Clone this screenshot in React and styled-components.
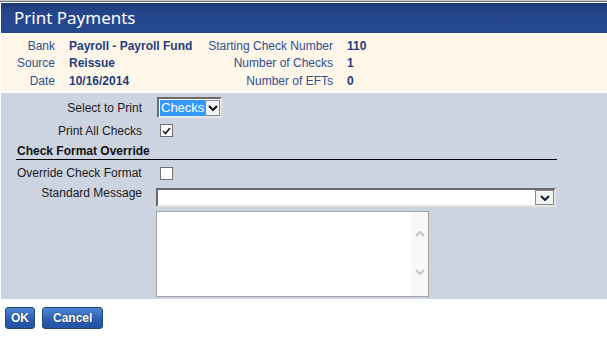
import styled, { createGlobalStyle } from "styled-components";

const Global = createGlobalStyle`
  body {
    margin: 0;
    background: #fff;
    font-family: "Liberation Sans", Arial, sans-serif;
    font-size: 12px;
  }
`

const Page = styled.div`
  width: 607px;
  border-top: 1px solid #c9cbcf;
  box-shadow: inset 0 1px 0 #6b6e73;
  padding-top: 2px;
  padding-left: 1px;
  box-sizing: border-box;
`

const TitleBar = styled.div`
  height: 30px;
  background: linear-gradient(#1d3876 0%, #25468c 35%, #27498f 100%);
  color: #fff;
  font-family: "Noto Sans", "Open Sans", sans-serif;
  font-size: 17px;
  line-height: 30px;
  padding-left: 13px;
`

const Info = styled.div`
  margin-top: 3px;
  background: #fef6e9;
  height: 55px;
  box-sizing: border-box;
  padding-top: 1px;
  display: grid;
  grid-template-columns: 54px 120px 130px auto;
  column-gap: 14px;
  grid-auto-rows: 17.5px;
  align-items: center;
  white-space: nowrap;
`

const InfoLabel = styled.div`
  color: #2f4f8f;
  text-align: right;
`

const InfoValue = styled.div`
  color: #1f3d7c;
  font-weight: bold;
`

const Form = styled.div`
  margin-top: 2px;
  background: #cdd4e1;
  height: 206px;
  box-sizing: border-box;
  padding: 4px 0 0 15px;
`

const Row = styled.div`
  display: grid;
  grid-template-columns: 126px 1fr;
  column-gap: 14px;
  align-items: ${p => p.top ? "start" : "center"};
  height: ${p => p.h}px;
  color: #1b1b1b;
`

const Label = styled.div`
  text-align: ${p => p.left ? "left" : "right"};
  padding-left: ${p => p.left ? "1px" : "0"};
  padding-top: ${p => p.pt || 0}px;
  line-height: 14px;
`

const Heading = styled.div`
  font-weight: bold;
  color: #111;
  padding-left: 1px;
  height: 16px;
  line-height: 17px;
  border-bottom: 1px solid #000;
  width: 540px;
`

const SelectBox = styled.div`
  display: flex;
  align-items: center;
  box-sizing: border-box;
  width: ${p => p.w}px;
  height: ${p => p.h}px;
  background: #fff;
  border-top: 2px solid #6a6a6a;
  border-left: 2px solid #6a6a6a;
  border-bottom: 2px solid #e4e4e4;
  border-right: 2px solid #e4e4e4;
  padding: 0 0 0 1px;
  margin-left: ${p => p.ml || 0}px;
  margin-top: ${p => p.mt || 0}px;
`

const Selected = styled.span`
  background: #3399ff;
  color: #fff;
  font-size: 13px;
  line-height: 16px;
  padding: 0 1px;
`

const DropButton = styled.div`
  margin-left: auto;
  width: ${p => p.w}px;
  height: ${p => p.h}px;
  box-sizing: border-box;
  border: 1px solid #8a8a8a;
  background: #f2f2f2;
  display: flex;
  align-items: center;
  justify-content: center;
`

const Check = styled.div`
  width: 13px;
  height: 13px;
  box-sizing: border-box;
  border: 1px solid #6f6f6f;
  background: #fff;
  margin-left: 4px;
  display: flex;
  align-items: center;
  justify-content: center;
`

const TextArea = styled.div`
  width: 273px;
  height: 86px;
  margin-top: 4px;
  box-sizing: border-box;
  border: 1px solid #a3a3a3;
  background: #fff;
  display: flex;
  justify-content: flex-end;
`

const ScrollTrack = styled.div`
  width: 17px;
  background: #f8f8f8;
  display: flex;
  flex-direction: column;
  align-items: center;
  padding-top: 19px;
  gap: 32px;
`

const Buttons = styled.div`
  display: flex;
  gap: 7px;
  padding: 8px 0 0 4px;
`

const Button = styled.button`
  height: 22px;
  padding: 0 ${p => p.px}px;
  border: 1px solid #1f4a6b;
  border-radius: 3px;
  background: linear-gradient(#4f86d6, #2a5cb0 60%, #2352a6);
  color: #fff;
  font-family: "Liberation Sans", Arial, sans-serif;
  font-weight: bold;
  font-size: 12px;
  text-shadow: 0 0 1px #123;
`

const Chevron = ({ color = "#000", up }) => (
  <svg width="10" height="6" viewBox="0 0 10 6">
    <path d={up ? "M1 5 L5 1 L9 5" : "M1 1 L5 5 L9 1"} fill="none" stroke={color} strokeWidth="2" />
  </svg>
)

const App = () => {
  return (
    <>
      <Global />
      <Page>
        <TitleBar>Print Payments</TitleBar>
        <Info>
          <InfoLabel>Bank</InfoLabel>
          <InfoValue>Payroll - Payroll Fund</InfoValue>
          <InfoLabel>Starting Check Number</InfoLabel>
          <InfoValue>110</InfoValue>
          <InfoLabel>Source</InfoLabel>
          <InfoValue>Reissue</InfoValue>
          <InfoLabel>Number of Checks</InfoLabel>
          <InfoValue>1</InfoValue>
          <InfoLabel>Date</InfoLabel>
          <InfoValue>10/16/2014</InfoValue>
          <InfoLabel>Number of EFTs</InfoLabel>
          <InfoValue>0</InfoValue>
        </Info>
        <Form>
          <Row h={21}>
            <Label>Select to Print</Label>
            <SelectBox w={65} h={21} ml={1}>
              <Selected>Checks</Selected>
              <DropButton w={16} h={16}>
                <Chevron color="#111" />
              </DropButton>
            </SelectBox>
          </Row>
          <Row h={25}>
            <Label>Print All Checks</Label>
            <Check>
              <svg width="9" height="8" viewBox="0 0 9 8">
                <path d="M1 4 L3.5 6.5 L8 1" fill="none" stroke="#1a1a2a" strokeWidth="1.6" />
              </svg>
            </Check>
          </Row>
          <Heading>Check Format Override</Heading>
          <Row h={26}>
            <Label left>Override Check Format</Label>
            <Check />
          </Row>
          <Row h={21} top>
            <Label>Standard Message</Label>
            <SelectBox w={400} h={19} mt={2}>
              <DropButton w={19} h={15}>
                <Chevron color="#111a33" />
              </DropButton>
            </SelectBox>
          </Row>
          <Row h={90} top>
            <div />
            <TextArea>
              <ScrollTrack>
                <Chevron color="#c4c4c4" up />
                <Chevron color="#c4c4c4" />
              </ScrollTrack>
            </TextArea>
          </Row>
        </Form>
        <Buttons>
          <Button px={5}>OK</Button>
          <Button px={10}>Cancel</Button>
        </Buttons>
      </Page>
    </>
  )
}

export default App
